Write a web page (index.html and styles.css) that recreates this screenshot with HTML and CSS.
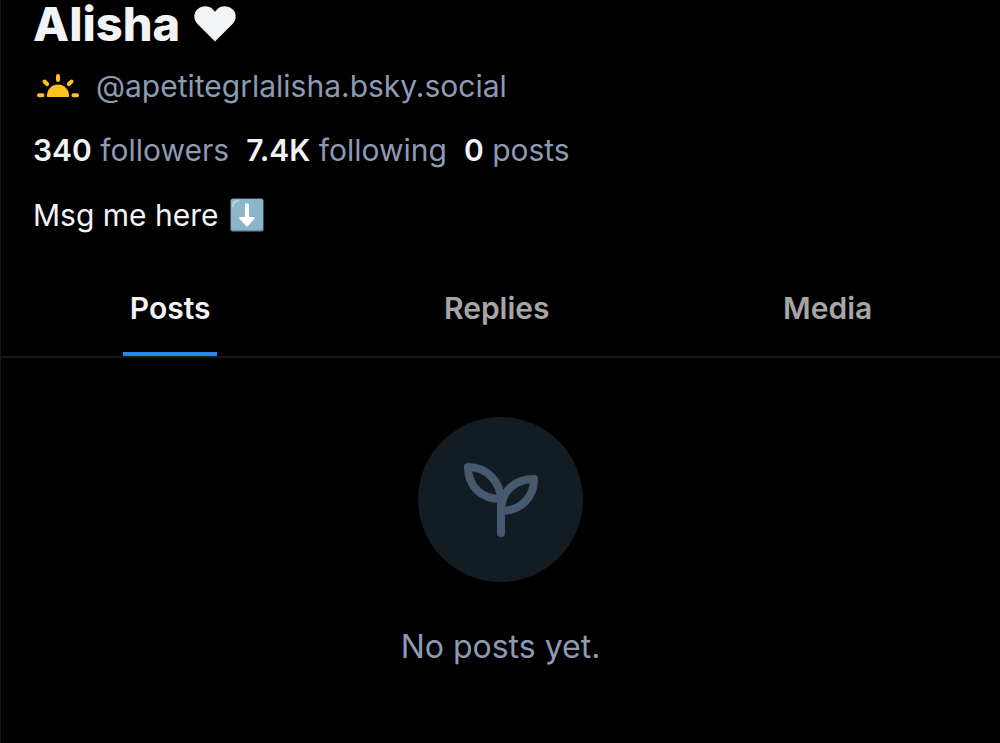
FILE: index.html
```html
<!DOCTYPE html>
<html lang="en">
<head>
<meta charset="utf-8">
<meta name="viewport" content="width=device-width, initial-scale=1">
<title>Alisha</title>
<link rel="stylesheet" href="styles.css">
</head>
<body>
<main class="profile">
  <header class="profile-header">
    <h1 class="name">Alisha
      <svg class="heart" viewBox="0 0 42 36" role="img" aria-label="heart"><path d="M21 35.500L3.500 18C-1 13.500-.5 6.500 3.800 3 8.500-1 15.500-.5 19 3.500L21 5.800 23 3.500C26.500-.5 33.500-1 38.200 3 42.500 6.500 43 13.500 38.500 18Z"/></svg>
    </h1>
    <div class="handle">
      <svg class="sun" viewBox="0 0 44 26" aria-hidden="true">
        <path class="sun-disc" d="M12 24C11.200 24 11 23.500 11 22.500A11 11 0 0 1 33 22.500C33 23.500 32.800 24 32 24Z"/>
        <path class="sun-rays" d="M22 3v4M8.500 8.500l2.700 2.700M35.500 8.500l-2.700 2.700M3 22.300h3.500M37.500 22.300H41"/>
      </svg>
      <span>@apetitegrlalisha.bsky.social</span>
    </div>
    <div class="stats">
      <a class="stat" href="#followers"><strong>340</strong> followers</a>
      <a class="stat" href="#following"><strong>7.4K</strong> following</a>
      <span class="stat"><strong>0</strong> posts</span>
    </div>
    <p class="bio">Msg me here
      <svg class="down" viewBox="0 0 34 34" role="img" aria-label="down arrow">
        <rect class="down-edge" x=".5" y=".5" width="33" height="33" rx="2.500"/>
        <rect class="down-face" x="1" y="1" width="32" height="31" rx="2"/>
        <path class="down-shine" d="M2.800 8.500C3 5 5 3 8.500 2.800"/>
        <path class="down-arrow" d="M15 6.500Q15 5.500 16 5.500H18Q19 5.500 19 6.500V19H24Q25.500 19.300 24.500 20.700L18 28Q17 29 16 28L9.500 20.700Q8.500 19.300 10 19H15Z"/>
      </svg>
    </p>
  </header>
  <nav class="tabs" role="tablist">
    <button class="tab active" role="tab" aria-selected="true"><span class="tab-label">Posts</span></button>
    <button class="tab" role="tab" aria-selected="false"><span class="tab-label">Replies</span></button>
    <button class="tab" role="tab" aria-selected="false"><span class="tab-label">Media</span></button>
  </nav>
  <section class="empty">
    <div class="empty-badge">
      <svg class="sprout" viewBox="0 0 76 76" aria-hidden="true">
        <path d="M38 71V39C38 20 24 5 5 5 5 24 18 37 38 37M38 49C38 30 51 17 71 17 71 36 57 49 38 49Z"/>
      </svg>
    </div>
    <p class="empty-text">No posts yet.</p>
  </section>
</main>
</body>
</html>
```
FILE: styles.css
```css
* {
  box-sizing: border-box;
}

body {
  margin: 0;
  background: #000;
  color: #f1f3f5;
  font-family: Inter, "Liberation Sans", sans-serif;
  font-size: 30px;
  line-height: 40px;
}

.profile {
  min-height: 100vh;
  border-left: 1px solid #16181a;
}

.profile-header {
  display: flex;
  flex-direction: column;
  padding: 0 32px;
}

.name {
  display: flex;
  align-items: center;
  gap: 14px;
  margin: 0;
  font-size: 47px;
  font-weight: 800;
  line-height: 48px;
}

.heart {
  width: 42px;
  height: 36px;
  fill: #f1f3f5;
}

.handle {
  display: flex;
  align-items: center;
  gap: 16px;
  margin-top: 18px;
  color: #8c9bb2;
}

.sun {
  width: 44px;
  height: 26px;
  margin-left: 3px;
}

.sun-disc {
  fill: #ffc21f;
}

.sun-rays {
  fill: none;
  stroke: #ffc21f;
  stroke-width: 4;
  stroke-linecap: round;
}

.stats {
  display: flex;
  flex-wrap: wrap;
  gap: 17px;
  margin-top: 24px;
}

.stat {
  color: #8c9bb2;
  text-decoration: none;
}

.stat strong {
  color: #f1f3f5;
  font-weight: 600;
}

.bio {
  display: flex;
  align-items: center;
  gap: 11px;
  margin: 25px 0 0;
}

.down {
  width: 34px;
  height: 34px;
}

.down-edge {
  fill: #5e93a9;
}

.down-face {
  fill: #8bb5c9;
}

.down-shine {
  fill: none;
  stroke: #b5d3df;
  stroke-width: 2;
  stroke-linecap: round;
}

.down-arrow {
  fill: #fff;
}

.tabs {
  display: flex;
  margin-top: 38px;
  padding: 0 11px 0 12px;
  border-bottom: 2px solid #16181b;
}

.tab {
  display: flex;
  flex: 1 1 auto;
  justify-content: center;
  padding: 0;
  border: 0;
  background: none;
  color: #a6a6a6;
  font: inherit;
  font-weight: 600;
}

.tab-label {
  padding: 15px 7px 24px;
  border-bottom: 4px solid transparent;
}

.active {
  color: #f1f3f5;
}

.active .tab-label {
  border-bottom-color: #2b83ed;
}

.empty {
  display: flex;
  flex-direction: column;
  align-items: center;
  padding: 59px 33px;
}

.empty-badge {
  display: grid;
  place-items: center;
  width: 165px;
  height: 165px;
  border-radius: 50%;
  background: #131b23;
}

.sprout {
  width: 76px;
  height: 76px;
  fill: none;
  stroke: #46596f;
  stroke-width: 8;
  stroke-linecap: round;
  stroke-linejoin: round;
}

.empty-text {
  margin: 45px 0 0;
  color: #8c9bb2;
  font-size: 32px;
}
```
